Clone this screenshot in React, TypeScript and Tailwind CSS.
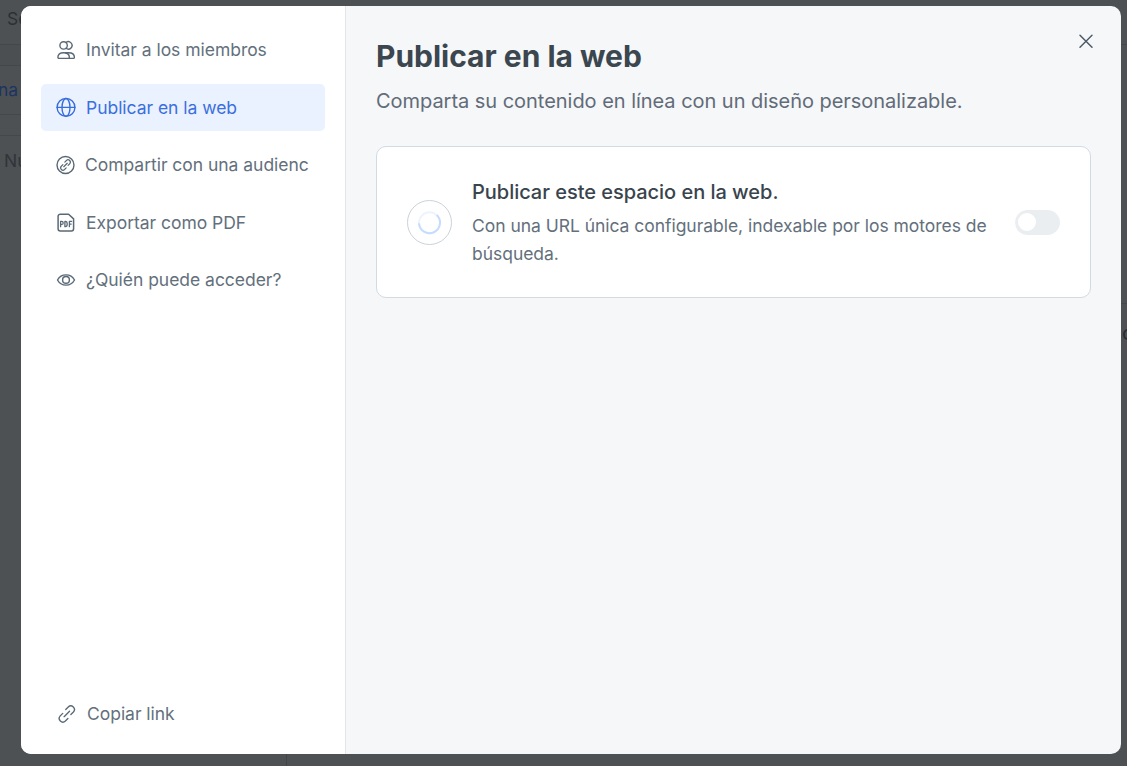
import type { ReactNode } from "react";

const svgProps = {
  viewBox: "0 0 20 20",
  width: 20,
  height: 20,
  fill: "none",
  stroke: "currentColor",
  strokeWidth: 1.4,
  strokeLinecap: "round" as const,
  strokeLinejoin: "round" as const,
};

function MembersIcon() {
  return (
    <svg {...svgProps}>
      <circle cx="7.6" cy="5.4" r="3.7" />
      <path d="M10 2.500a3.700 3.700 0 1 1 0 5.800" />
      <path d="M1.900 17.200c0-2.900 2.200-4.500 5.600-4.500s5.900 1.600 5.900 4.500c0 .8-.4 1.200-1.100 1.200H3c-.7 0-1.100-.4-1.100-1.200Z" />
      <path d="M9.500 12.700h3c3.500 0 5.900 1.600 5.900 4.500 0 .8-.4 1.200-1.100 1.200h-4.800" />
    </svg>
  );
}

function GlobeIcon() {
  return (
    <svg {...svgProps}>
      <circle cx="10" cy="10.400" r="8.900" />
      <ellipse cx="10" cy="10.400" rx="4" ry="8.900" />
      <path d="M1.100 10.400h17.800" />
    </svg>
  );
}

function ChainPaths() {
  return (
    <>
      <path d="M8.900 5.300 11.500 2.700a3.750 3.750 0 0 1 5.300 5.300l-2.600 2.600" />
      <path d="M11.100 14.700 8.500 17.300a3.750 3.750 0 0 1-5.300-5.300l2.600-2.600" />
      <path d="m7.200 12.800 5.600-5.600" />
    </>
  );
}

function CircleLinkIcon() {
  return (
    <svg {...svgProps}>
      <circle cx="9.500" cy="10" r="8.500" />
      <g transform="translate(3.300 3.800) scale(.62)" strokeWidth="1.900">
        <ChainPaths />
      </g>
    </svg>
  );
}

function PdfIcon() {
  return (
    <svg {...svgProps} strokeWidth={1.5}>
      <path d="M4.300 2.200h8.300l5 4.700v9.900a2.200 2.200 0 0 1-2.200 2.200H4.300a2.200 2.200 0 0 1-2.200-2.200V4.400a2.200 2.200 0 0 1 2.200-2.200Z" />
      <path
        strokeWidth="1.300"
        d="M4.600 14.700V9.400h1.100a1.500 1.500 0 0 1 0 3H4.600M8.900 9.400v5.300h.6c1.200 0 1.700-.8 1.700-2.600S10.700 9.400 9.500 9.400ZM13.400 14.700V9.400h2.200M13.400 12.100h1.800"
      />
    </svg>
  );
}

function EyeIcon() {
  return (
    <svg {...svgProps}>
      <path d="M1.500 10C3.300 6.600 6.300 4.900 10 4.900s6.700 1.700 8.500 5.100c-1.800 3.400-4.800 5.100-8.500 5.100S3.300 13.400 1.500 10Z" />
      <circle cx="10" cy="9.900" r="3.400" />
    </svg>
  );
}

function LinkIcon() {
  return (
    <svg {...svgProps} viewBox="-1.200 -.3 20.700 20.700">
      <ChainPaths />
    </svg>
  );
}

function NavItem({
  icon,
  label,
  active = false,
  className = "gap-2.5 pt-0.5",
}: {
  icon: ReactNode;
  label: string;
  active?: boolean;
  className?: string;
}) {
  return (
    <button
      className={`flex h-[47px] w-full items-center rounded-[5px] px-[15px] text-[17.5px] tracking-[-0.03px] ${className} ${
        active ? "bg-[#eaf1ff] text-[#3a6fdd]" : "text-[#63707c]"
      }`}
    >
      <span className="-mt-0.5 shrink-0 text-[#5a6976]">
        <span className={active ? "text-[#366ddb]" : ""}>{icon}</span>
      </span>
      <span className="overflow-hidden whitespace-nowrap">{label}</span>
    </button>
  );
}

function Backdrop() {
  return (
    <div className="flex h-full justify-between overflow-hidden bg-[#4d5154] text-[17.5px]">
      <div className="w-[21px] overflow-hidden whitespace-nowrap">
        <div className="flex h-[45px] items-center border-b border-[#43484b] pb-[5px] pl-[7px] text-[#2b3034]">Seguir</div>
        <div className="h-[21px] border-b border-[#43484b] bg-[#4b4f52]" />
        <div className="flex h-[49px] items-center border-b border-[#43484b] text-[#1c3462]">
          <span className="-ml-0.5">na</span>
        </div>
        <div className="h-[21px] border-b border-[#43484b]" />
        <div className="flex h-[49px] items-center pt-0.5 pl-1 text-[#303539]">Nuevo</div>
      </div>
      <div className="flex grow items-end">
        <div className="h-[12px] w-[266px] border-r border-[#414649]" />
      </div>
      <div className="w-[6px] overflow-hidden">
        <div className="h-[45px] border-b border-[#43484b]" />
        <div className="h-[259px] border-b border-[#43484b]" />
        <div className="flex h-[56px] items-center pt-0.5 pl-px text-[20px] text-[#272c30]">o</div>
      </div>
    </div>
  );
}

export default function App() {
  return (
    <div className="relative h-[766px] w-[1127px] overflow-hidden font-['Inter',sans-serif]">
      <Backdrop />
      <div role="dialog" className="absolute top-[6px] left-[21px] flex h-[748px] w-[1100px] overflow-hidden rounded-[10px] bg-[#f5f7f9]">
        <aside className="flex w-[325px] shrink-0 flex-col justify-between border-r border-[#e2e5e9] bg-white px-5 pt-5 pb-4">
          <nav className="flex flex-col gap-[10.5px]">
            <NavItem icon={<MembersIcon />} label="Invitar a los miembros" />
            <NavItem icon={<GlobeIcon />} label="Publicar en la web" active />
            <NavItem icon={<CircleLinkIcon />} label="Compartir con una audienc" className="gap-[9px] pt-0.5" />
            <NavItem icon={<PdfIcon />} label="Exportar como PDF" />
            <NavItem icon={<EyeIcon />} label="¿Quién puede acceder?" />
          </nav>
          <NavItem icon={<LinkIcon />} label="Copiar link" className="gap-[11px]" />
        </aside>
        <main className="grow px-[30px] pt-[30px]">
          <header className="flex justify-between">
            <div>
              <h1 className="text-[30px] leading-[40px] font-bold tracking-[-0.02px] text-[#3b464f]">Publicar en la web</h1>
              <p className="mt-[10px] text-[20px] leading-[30px] tracking-[-0.035px] text-[#626b78]">
                Comparta su contenido en línea con un diseño personalizable.
              </p>
            </div>
            <button aria-label="Cerrar" className="-mr-[5px] h-5 w-5 text-[#505d69]">
              <svg viewBox="0 0 20 20" width="20" height="20" stroke="currentColor" strokeWidth="1.500" strokeLinecap="round" overflow="visible">
                <path d="m4 -.7 12 12M16 -.7 4 11.300" />
              </svg>
            </button>
          </header>
          <section className="mt-[30px] flex h-[152px] items-center rounded-[10px] border border-[#d2dae3] bg-white px-[30px]">
            <div className="flex h-[45px] w-[45px] shrink-0 items-center justify-center rounded-full border border-[#ccd2d9]">
              <svg viewBox="0.500 -0.800 24 24" width="24" height="24" fill="none" strokeWidth="2" overflow="visible">
                <circle cx="12" cy="12" r="10.500" stroke="#edf4ff" />
                <path d="M19.200 4.300A10.500 10.500 0 1 1 1.500 12.500" stroke="#c6dcff" />
              </svg>
            </div>
            <div className="ml-5 w-[530px] shrink-0">
              <h2 className="text-[20px] leading-[30px] font-medium tracking-[-0.03px] text-[#39444d]">Publicar este espacio en la web.</h2>
              <p className="mt-[5px] text-[17.5px] leading-[28px] tracking-[-0.035px] text-[#63707c]">
                Con una URL única configurable, indexable por los motores de búsqueda.
              </p>
            </div>
            <button role="switch" aria-checked="false" className="ml-auto flex h-[25px] w-[45px] shrink-0 items-center rounded-full bg-[#ebeef1] pl-[3px]">
              <span className="h-[18px] w-[18px] rounded-full bg-white" />
            </button>
          </section>
        </main>
      </div>
    </div>
  );
}
